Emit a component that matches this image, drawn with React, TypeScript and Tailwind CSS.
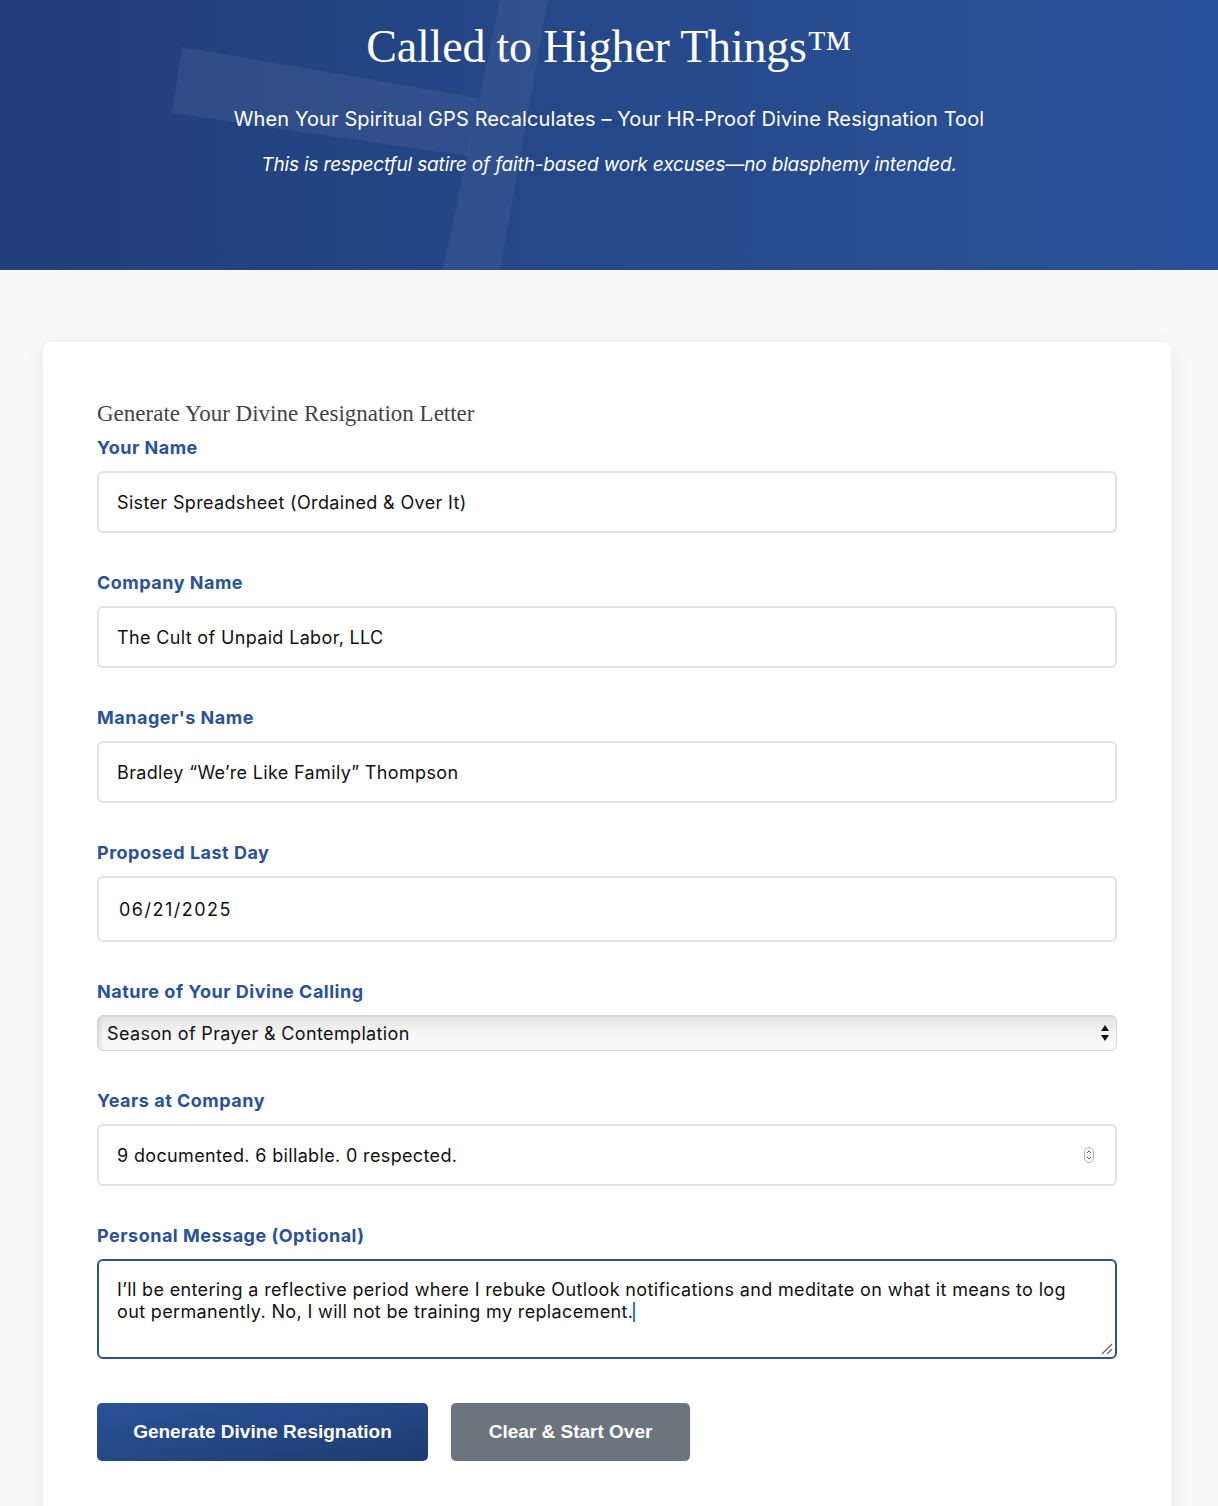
import React from "react";

const labelCls =
  "block text-[18px] leading-[22px] font-bold text-[#2a5298] mb-[12px] font-['Inter',sans-serif] tracking-[0.5px]";
const inputCls =
  "w-full h-[62px] border-2 border-[#e1e1e1] rounded-[6px] px-[18px] text-[18px] text-[#111] bg-white font-['Inter',sans-serif] tracking-[0.35px] outline-none";

function Field({ label, children, mb = "mb-[39px]" }: { label: string; children: React.ReactNode; mb?: string }) {
  return (
    <div className={mb}>
      <label className={labelCls}>{label}</label>
      {children}
    </div>
  );
}

export default function App() {
  return (
    <div className="min-h-[1506px] bg-[#f8f8f8] font-['Inter',sans-serif]">
      <header className="relative h-[270px] overflow-hidden bg-gradient-to-r from-[#213f7a] to-[#2a529a] text-white">
        <svg className="absolute inset-0" width="1218" height="270" viewBox="0 0 1218 270">
          <polygon points="500,0 548,0 500,270 443,270" fill="rgba(255,255,255,0.06)" />
          <polygon points="182,47 478,98 468,156 172,113" fill="rgba(255,255,255,0.06)" />
        </svg>
        <div className="relative flex flex-col items-center pt-[19px]">
          <h1 className="font-['Liberation_Serif',serif] text-[46px] leading-[56px] font-normal tracking-[-0.2px]">
            Called to Higher Things™
          </h1>
          <p className="mt-[32px] text-[20px] leading-[24px] tracking-[0.1px]">
            When Your Spiritual GPS Recalculates – Your HR-Proof Divine Resignation Tool
          </p>
          <p className="mt-[22px] text-[19px] leading-[24px] italic tracking-[-0.15px]">
            This is respectful satire of faith-based work excuses—no blasphemy intended.
          </p>
        </div>
      </header>

      <main className="pl-[43px] pr-[47px] pt-[72px]">
        <div className="bg-white rounded-[8px] shadow-[0_4px_20px_rgba(0,0,0,0.07)] px-[54px] pt-[57px] pb-[60px]">
          <h2 className="font-['Liberation_Serif',serif] text-[23px] leading-[30px] text-[#444] mb-[8px]">
            Generate Your Divine Resignation Letter
          </h2>

          <Field label="Your Name">
            <input className={inputCls} readOnly value="Sister Spreadsheet (Ordained & Over It)" />
          </Field>
          <Field label="Company Name">
            <input className={inputCls} readOnly value="The Cult of Unpaid Labor, LLC" />
          </Field>
          <Field label="Manager's Name">
            <input className={inputCls} readOnly value="Bradley “We’re Like Family” Thompson" />
          </Field>
          <Field label="Proposed Last Day">
            <input
              className={inputCls + " h-[66px] px-[20px] tracking-[1.5px]"}
              readOnly
              value="06/21/2025"
            />
          </Field>
          <Field label="Nature of Your Divine Calling">
            <div className="relative h-[36px] rounded-[6px] border border-[#d6d6d6] bg-gradient-to-b from-[#e4e4e4] via-[#f4f4f4] to-[#fbfbfb] shadow-[inset_3px_0_3px_rgba(0,0,0,0.08)] flex items-center pl-[9px] text-[18px] tracking-[0.35px] text-[#111]">
              Season of Prayer &amp; Contemplation
              <svg className="absolute right-[6px] top-[8px]" width="10" height="18" viewBox="0 0 10 18">
                <polygon points="5,1 9,7 1,7" fill="#111" />
                <polygon points="1,11 9,11 5,17" fill="#111" />
              </svg>
            </div>
          </Field>
          <Field label="Years at Company">
            <div className="relative">
              <input className={inputCls} readOnly value="9 documented. 6 billable. 0 respected." />
              <svg className="absolute right-[23px] top-[23px]" width="10" height="16" viewBox="0 0 10 16">
                <rect x="0.5" y="0.5" width="9" height="15" rx="4.5" fill="none" stroke="#999" strokeWidth="0.8" />
                <polyline points="3,6 5,4 7,6" fill="none" stroke="#555" strokeWidth="1" />
                <polyline points="3,10 5,12 7,10" fill="none" stroke="#555" strokeWidth="1" />
              </svg>
            </div>
          </Field>
          <Field label="Personal Message (Optional)" mb="mb-[44px]">
            <div className="relative h-[100px] border-2 border-[#2a5298] rounded-[6px] pl-[18px] pr-[40px] pt-[18px] text-[18px] leading-[22px] tracking-[0.35px] text-[#111]">
              I’ll be entering a reflective period where I rebuke Outlook notifications and meditate on what it means to log out permanently. No, I will not be training my replacement.
              <span className="inline-block w-[2px] h-[20px] bg-[#1a7cff] align-[-4px]" />
              <svg className="absolute right-[1px] bottom-[1px]" width="14" height="14" viewBox="0 0 14 14">
                <line x1="2" y1="12" x2="12" y2="2" stroke="#666" strokeWidth="1.3" />
                <line x1="7" y1="12" x2="12" y2="7" stroke="#666" strokeWidth="1.3" />
              </svg>
            </div>
          </Field>

          <div className="flex gap-[23px]">
            <button className="h-[58px] w-[331px] rounded-[5px] bg-gradient-to-br from-[#2a5298] to-[#1e3c72] text-white text-[19px] font-bold font-['Liberation_Sans',sans-serif]">
              Generate Divine Resignation
            </button>
            <button className="h-[58px] w-[239px] rounded-[5px] bg-[#6c757d] text-white text-[19px] font-bold font-['Liberation_Sans',sans-serif]">
              Clear &amp; Start Over
            </button>
          </div>
        </div>
      </main>
    </div>
  );
}
